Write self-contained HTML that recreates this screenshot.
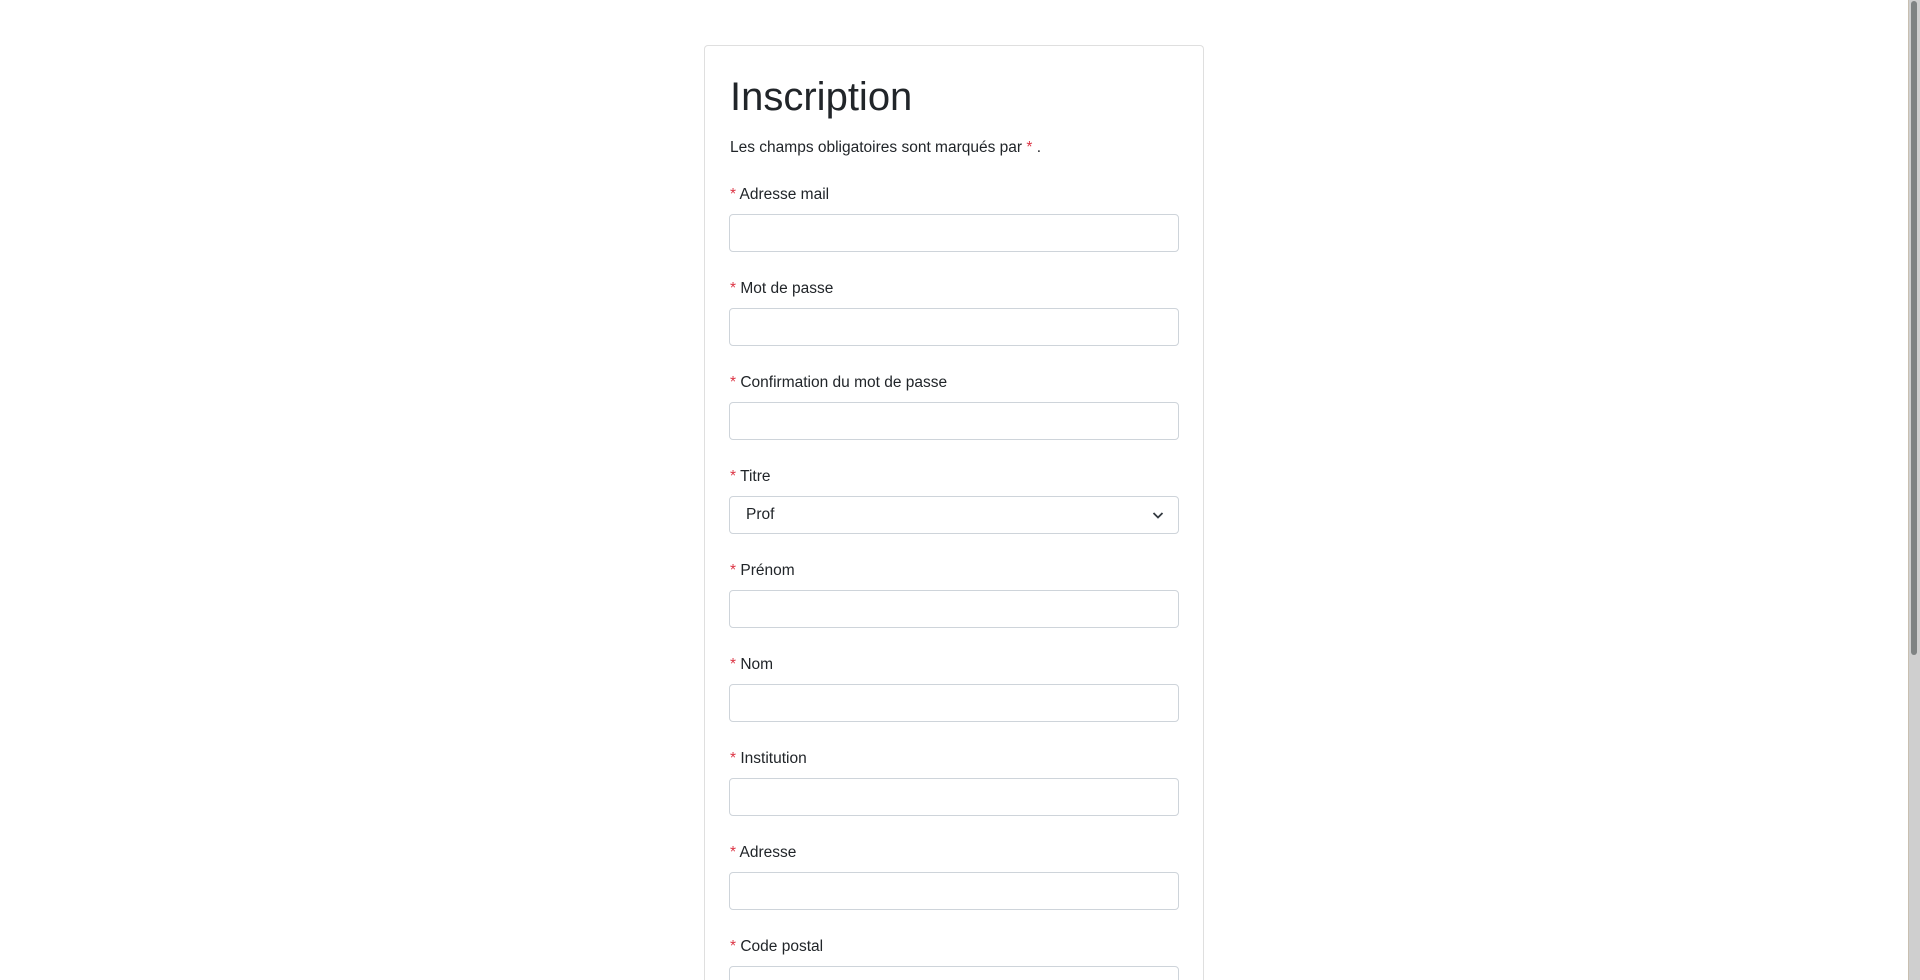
<!DOCTYPE html>
<html><head><meta charset="utf-8"><style>
html,body{margin:0;padding:0;overflow:hidden;background:#fff;width:1920px;height:980px}
body{font-family:"Liberation Sans",sans-serif;color:#212529;position:relative}
.card{position:absolute;left:704px;top:45px;width:498px;height:940px;overflow:hidden;border:1px solid #dfdfdf;border-bottom:none;border-radius:4px 4px 0 0;background:#fff}
h1{position:absolute;left:25px;top:27px;margin:0;font-weight:400;font-size:40px;line-height:48px}
.p{position:absolute;left:25px;top:90px;font-size:15.5px;line-height:24px}
.r{color:#dc3545}
.lab{position:absolute;left:25px;font-size:15.5px;line-height:24px}
.in{position:absolute;left:24px;width:448px;height:36px;border:1px solid #ced4da;border-radius:4px;background:#fff}
.sel{font-size:15.5px;line-height:36px;padding-left:16px;box-sizing:border-box;width:450px;height:38px}
.sb{position:absolute;left:1908px;top:0;width:12px;height:980px;background:#cfcfcf;border-left:1px solid #c8bfb0;box-sizing:border-box}
.th{position:absolute;left:1911px;top:1px;width:6px;height:654px;background:#7f8383;border-radius:3px}
</style></head><body>
<div class="card">
<h1>Inscription</h1>
<div class="p">Les champs obligatoires sont marqués par <span class="r">*</span> .</div>

<div class="lab" style="top:137px"><span class="r">*</span> Adresse mail</div>
<div class="in" style="top:168px"></div>
<div class="lab" style="top:231px"><span class="r">*</span> Mot de passe</div>
<div class="in" style="top:262px"></div>
<div class="lab" style="top:325px"><span class="r">*</span> Confirmation du mot de passe</div>
<div class="in" style="top:356px"></div>
<div class="lab" style="top:419px"><span class="r">*</span> Titre</div>
<div class="in sel" style="top:450px">Prof
<svg style="position:absolute;right:14px;top:14px" width="12" height="9" viewBox="0 0 12 9"><path d="M1.5 2 L6 6.5 L10.5 2" fill="none" stroke="#343a40" stroke-width="1.8"/></svg></div>
<div class="lab" style="top:513px"><span class="r">*</span> Prénom</div>
<div class="in" style="top:544px"></div>
<div class="lab" style="top:607px"><span class="r">*</span> Nom</div>
<div class="in" style="top:638px"></div>
<div class="lab" style="top:701px"><span class="r">*</span> Institution</div>
<div class="in" style="top:732px"></div>
<div class="lab" style="top:795px"><span class="r">*</span> Adresse</div>
<div class="in" style="top:826px"></div>
<div class="lab" style="top:889px"><span class="r">*</span> Code postal</div>
<div class="in" style="top:920px"></div>
</div>
<div class="sb"></div><div class="th"></div>
</body></html>
